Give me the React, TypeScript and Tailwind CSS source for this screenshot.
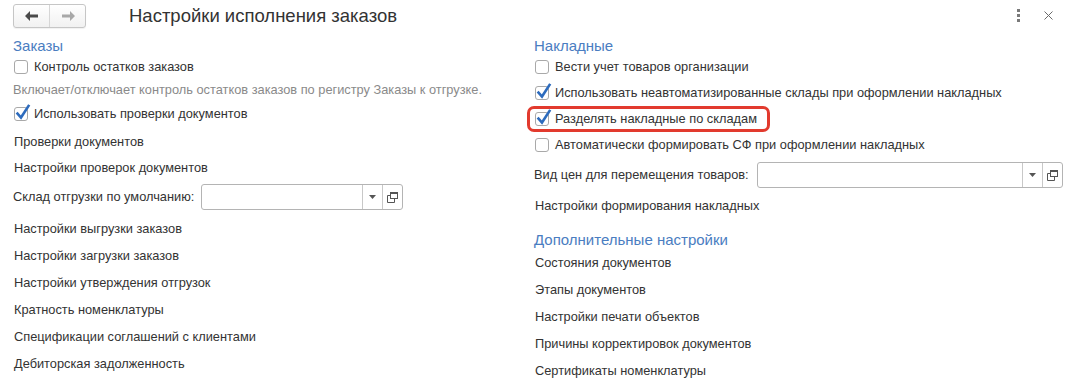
import React from "react";

const font = { fontFamily: '"Liberation Sans", Arial, sans-serif' };

function Check({ checked }: { checked?: boolean }) {
  return (
    <span className="relative inline-block w-[14px] h-[14px] shrink-0 rounded-[3px] border border-[#a9a9a9] bg-white">
      {checked && (
        <svg
          className="absolute left-[0px] top-[-4px]"
          width="16"
          height="17"
          viewBox="0 0 16 17"
        >
          <path
            d="M2.5 9.5 L6 13.5 L13.5 2"
            fill="none"
            stroke="#2d6bbd"
            strokeWidth="2.6"
            strokeLinecap="square"
            strokeLinejoin="miter"
          />
        </svg>
      )}
    </span>
  );
}

function CheckRow({ label, checked, className = "" }: { label: string; checked?: boolean; className?: string }) {
  return (
    <div className={`flex items-center h-[20px] gap-[6px] ${className}`}>
      <Check checked={checked} />
      <span className="text-[12.8px] text-[#333]">{label}</span>
    </div>
  );
}

function Link({ label, className = "" }: { label: string; className?: string }) {
  return (
    <div className={`flex items-center h-[20px] pl-[1px] text-[12.8px] text-[#333] ${className}`}>
      {label}
    </div>
  );
}

function Heading({ label, className = "" }: { label: string; className?: string }) {
  return (
    <div className={`flex items-center h-[20px] text-[15px] text-[#4a7dc1] ${className}`}>{label}</div>
  );
}

function Field({
  label,
  width,
  className = "",
  labelClass = "",
}: {
  label: string;
  width: number;
  className?: string;
  labelClass?: string;
}) {
  return (
    <div className={`flex items-center h-[26px] ${className}`}>
      <span className={`text-[12.8px] text-[#333] ${labelClass}`}>{label}</span>
      <div
        className="flex h-[26px] border border-[#b4b4b4] rounded-[3px] bg-white"
        style={{ width }}
      >
        <div className="flex-1" />
        <div className="w-[20px] border-l border-[#c8c8c8] flex items-center justify-center">
          <svg width="7" height="4" viewBox="0 0 7 4">
            <path d="M0 0 L7 0 L3.5 4 Z" fill="#555" />
          </svg>
        </div>
        <div className="w-[20px] border-l border-[#c8c8c8] flex items-center justify-center">
          <svg width="11" height="11" viewBox="0 0 11 11">
            <rect x="3.5" y="0.5" width="7" height="6" fill="none" stroke="#555" strokeWidth="1" />
            <path d="M3.5 3.5 L0.5 3.5 L0.5 10.5 L7.5 10.5 L7.5 6.5" fill="none" stroke="#555" strokeWidth="1" />
            <rect x="3.5" y="0.5" width="7" height="1.5" fill="#555" />
          </svg>
        </div>
      </div>
    </div>
  );
}

export default function App() {
  return (
    <div className="w-[1067px] h-[387px] bg-white overflow-hidden" style={font}>
      {/* Header */}
      <div className="flex items-center h-[32px] pl-[13px] pr-[8px]">
        <div className="flex h-[24px] w-[73px] border border-[#c6c6c6] rounded-[3px] bg-gradient-to-b from-white to-[#f1f1f1] shadow-[0_1px_1px_rgba(0,0,0,0.06)]">
          <div className="w-[36px] flex items-center justify-center border-r border-[#d6d6d6]">
            <svg width="14" height="10" viewBox="0 0 14 10">
              <path d="M0 5 L5 0 L5 3.5 L13 3.5 L13 6.5 L5 6.5 L5 10 Z" fill="#4a4a4a" />
            </svg>
          </div>
          <div className="flex-1 flex items-center justify-center">
            <svg width="14" height="10" viewBox="0 0 14 10">
              <path d="M14 5 L9 0 L9 3.5 L1 3.5 L1 6.5 L9 6.5 L9 10 Z" fill="#a8a8a8" />
            </svg>
          </div>
        </div>
        <div className="ml-[43px] text-[18.5px] text-[#333] leading-none">Настройки исполнения заказов</div>
        <div className="flex-1" />
        <div className="flex flex-col gap-[2px] mr-[24px] mt-[-2px]">
          <span className="w-[3px] h-[3px] bg-[#7a7a7a]" />
          <span className="w-[3px] h-[3px] bg-[#7a7a7a]" />
          <span className="w-[3px] h-[3px] bg-[#7a7a7a]" />
        </div>
        <svg width="9" height="9" viewBox="0 0 9 9" className="mr-[6px] mt-[-1px]">
          <path d="M0.5 0.5 L8.5 8.5 M8.5 0.5 L0.5 8.5" stroke="#6a6a6a" strokeWidth="1" />
        </svg>
      </div>

      <div className="flex">
        {/* Left column */}
        <div className="w-[521px] pl-[13px] pt-[4px] flex flex-col">
          <Heading label="Заказы" />
          <CheckRow label="Контроль остатков заказов" className="ml-[1px] mt-[1px]" />
          <div className="flex items-center h-[20px] mt-[3px] text-[12.8px] text-[#8a8a8a]">
            Включает/отключает контроль остатков заказов по регистру Заказы к отгрузке.
          </div>
          <CheckRow label="Использовать проверки документов" checked className="ml-[1px] mt-[4px]" />
          <Link label="Проверки документов" className="mt-[8px]" />
          <Link label="Настройки проверок документов" className="mt-[6px]" />
          <Field label="Склад отгрузки по умолчанию:" width={202} labelClass="mr-[7px]" className="mt-[6px]" />
          <Link label="Настройки выгрузки заказов" className="mt-[9px]" />
          <Link label="Настройки загрузки заказов" className="mt-[7px]" />
          <Link label="Настройки утверждения отгрузок" className="mt-[7px]" />
          <Link label="Кратность номенклатуры" className="mt-[7px]" />
          <Link label="Спецификации соглашений с клиентами" className="mt-[7px]" />
          <Link label="Дебиторская задолженность" className="mt-[7px]" />
        </div>

        {/* Right column */}
        <div className="flex-1 pl-[13px] pt-[4px] flex flex-col">
          <Heading label="Накладные" />
          <CheckRow label="Вести учет товаров организации" className="ml-[1px] mt-[1px]" />
          <CheckRow label="Использовать неавтоматизированные склады при оформлении накладных" checked className="ml-[1px] mt-[6px]" />
          <div className="relative mt-[6px]">
            <CheckRow label="Разделять накладные по складам" checked className="ml-[1px]" />
            <div className="absolute left-[-7px] top-[-3px] w-[243px] h-[26px] border-[3px] border-[#e23a2e] rounded-[7px]" />
          </div>
          <CheckRow label="Автоматически формировать СФ при оформлении накладных" className="ml-[1px] mt-[6px]" />
          <Field label="Вид цен для перемещения товаров:" width={306} labelClass="mr-[8px]" className="mt-[7px]" />
          <Link label="Настройки формирования накладных" className="mt-[8px]" />
          <Heading label="Дополнительные настройки" className="mt-[14px]" />
          <Link label="Состояния документов" className="mt-[3px]" />
          <Link label="Этапы документов" className="mt-[7px]" />
          <Link label="Настройки печати объектов" className="mt-[7px]" />
          <Link label="Причины корректировок документов" className="mt-[7px]" />
          <Link label="Сертификаты номенклатуры" className="mt-[7px]" />
        </div>
      </div>
    </div>
  );
}
